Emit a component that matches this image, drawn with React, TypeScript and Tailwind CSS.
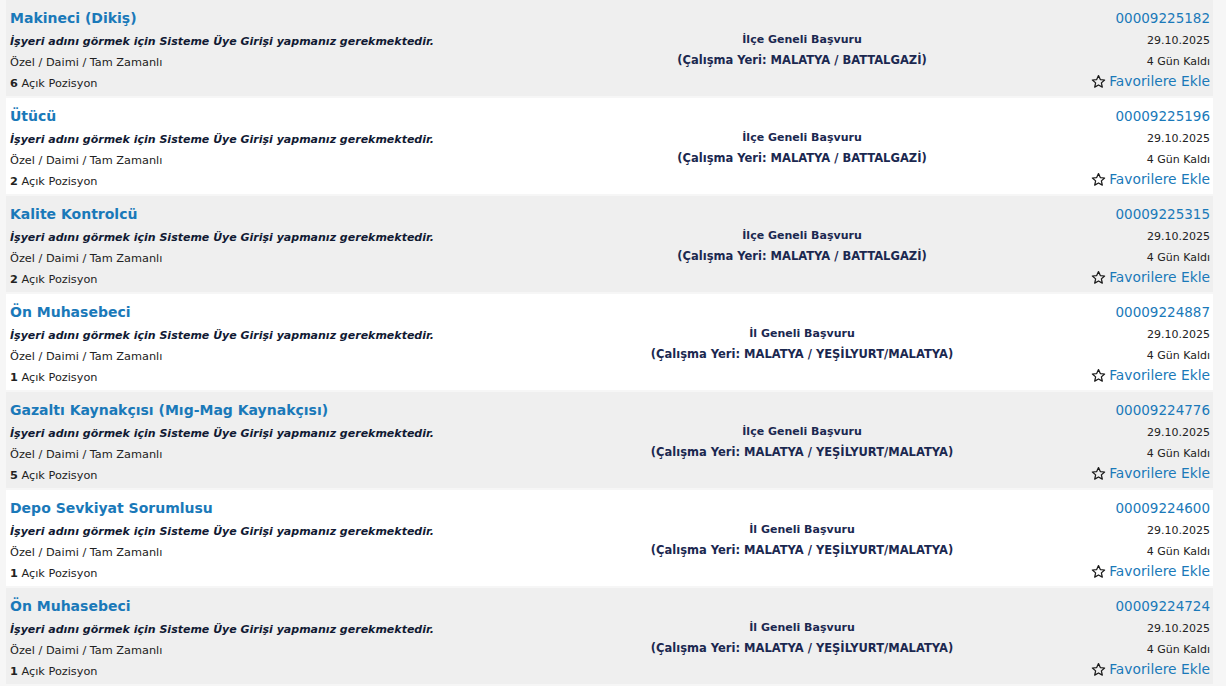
import React from 'react';

type Ilan = {
  baslik: string;
  no: string;
  adet: number;
  kapsam: string;
  yer: string;
};

const ilanlar: Ilan[] = [
  { baslik: 'Makineci (Dikiş)', no: '00009225182', adet: 6, kapsam: 'İlçe Geneli Başvuru', yer: 'MALATYA / BATTALGAZİ' },
  { baslik: 'Ütücü', no: '00009225196', adet: 2, kapsam: 'İlçe Geneli Başvuru', yer: 'MALATYA / BATTALGAZİ' },
  { baslik: 'Kalite Kontrolcü', no: '00009225315', adet: 2, kapsam: 'İlçe Geneli Başvuru', yer: 'MALATYA / BATTALGAZİ' },
  { baslik: 'Ön Muhasebeci', no: '00009224887', adet: 1, kapsam: 'İl Geneli Başvuru', yer: 'MALATYA / YEŞİLYURT/MALATYA' },
  { baslik: 'Gazaltı Kaynakçısı (Mıg-Mag Kaynakçısı)', no: '00009224776', adet: 5, kapsam: 'İlçe Geneli Başvuru', yer: 'MALATYA / YEŞİLYURT/MALATYA' },
  { baslik: 'Depo Sevkiyat Sorumlusu', no: '00009224600', adet: 1, kapsam: 'İl Geneli Başvuru', yer: 'MALATYA / YEŞİLYURT/MALATYA' },
  { baslik: 'Ön Muhasebeci', no: '00009224724', adet: 1, kapsam: 'İl Geneli Başvuru', yer: 'MALATYA / YEŞİLYURT/MALATYA' },
];

function StarIcon() {
  return (
    <svg width="15" height="15" viewBox="0 0 24 24" className="mr-[3px] shrink-0">
      <polygon
        points="12,2.5 14.9,8.9 21.8,9.6 16.6,14.2 18.1,21 12,17.5 5.9,21 7.4,14.2 2.2,9.6 9.1,8.9"
        fill="none"
        stroke="#1a1a1a"
        strokeWidth="2"
        strokeLinejoin="round"
      />
    </svg>
  );
}

function IlanSatiri({ ilan, index }: { ilan: Ilan; index: number }) {
  const bg = index % 2 === 0 ? 'bg-[#efefef]' : 'bg-white';
  return (
    <div className={`${bg} h-[96px] grid grid-cols-[590px_412px_1fr]`}>
      {/* sol: baslik ve detaylar */}
      <div className="pl-[4px] pt-[9px]">
        <a href="#" className="block leading-[18px] text-[14px] font-bold text-[#1a79b9] whitespace-nowrap">
          {ilan.baslik}
        </a>
        <p className="mt-[5px] leading-[20px] text-[11px] font-bold italic text-[#111a33] whitespace-nowrap">
          İşyeri adını görmek için Sisteme Üye Girişi yapmanız gerekmektedir.
        </p>
        <p className="leading-[21px] text-[11.3px] text-[#222]">Özel / Daimi / Tam Zamanlı</p>
        <p className="leading-[21px] text-[11.3px] text-[#222]">
          <b>{ilan.adet}</b> Açık Pozisyon
        </p>
      </div>

      {/* orta: basvuru kapsami */}
      <div className="pt-[30px] text-center font-bold text-[#1b2850]">
        <p className="leading-[20px] text-[11px]">{ilan.kapsam}</p>
        <p className="leading-[20px] text-[11.5px]">(Çalışma Yeri: {ilan.yer})</p>
      </div>

      {/* sag: ilan no, tarih */}
      <div className="pr-[3px] pt-[9px] flex flex-col items-end">
        <a href="#" className="leading-[18px] text-[13.5px] text-[#1a79b9]">{ilan.no}</a>
        <p className="mt-[4px] leading-[20px] text-[11px] text-[#222]">29.10.2025</p>
        <p className="mt-px leading-[20px] text-[11px] text-[#222]">4 Gün Kaldı</p>
        <a href="#" className="flex items-center leading-[18px] text-[13.8px] text-[#1a79b9]">
          <StarIcon />
          Favorilere Ekle
        </a>
      </div>
    </div>
  );
}

export default function App() {
  return (
    <div className="w-[1226px] h-[686px] overflow-hidden bg-[#f6f6f6] font-['DejaVu_Sans',Verdana,sans-serif]">
      <div className="pl-[6px] pr-[13px] flex flex-col gap-[2px]">
        {ilanlar.map((ilan, i) => (
          <IlanSatiri key={ilan.no} ilan={ilan} index={i} />
        ))}
      </div>
    </div>
  );
}
